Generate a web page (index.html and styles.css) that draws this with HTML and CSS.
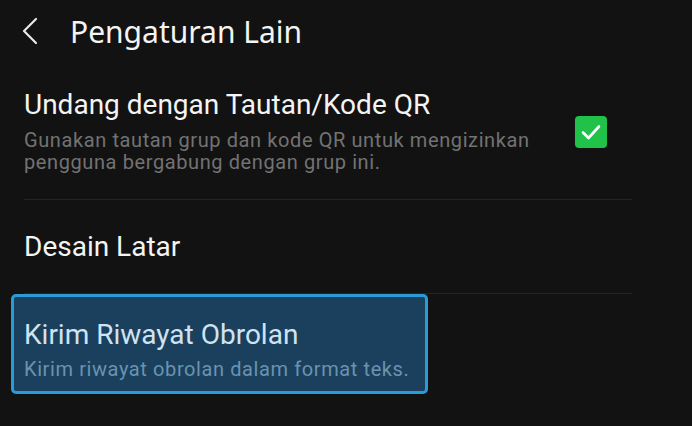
FILE: index.html
```html
<!DOCTYPE html>
<html lang="id">
	<head>
		<meta charset="UTF-8" />
		<meta name="viewport" content="width=device-width, initial-scale=1.0" />
		<title>Pengaturan Lain</title>
		<link rel="stylesheet" href="styles.css">
	</head>
	<body>
		<header class="topbar">
			<span class="back">
				<svg width="18" height="28" viewBox="0 0 18 28">
					<path d="M15 2 L3 14 L15 26" fill="none" stroke="#e8e8e8" stroke-width="2.2" stroke-linecap="round" stroke-linejoin="round" />
				</svg>
			</span>
			<h1>Pengaturan Lain</h1>
		</header>

		<div class="list">
			<div class="item item-check">
				<div class="text">
					<div class="title">Undang dengan Tautan/Kode QR</div>
					<div class="desc">Gunakan tautan grup dan kode QR untuk mengizinkan pengguna bergabung dengan grup ini.</div>
				</div>
				<span class="checkbox">
					<svg width="32" height="32" viewBox="0 0 32 32">
						<rect x="0" y="0" width="32" height="32" rx="4" fill="#20c24a" />
						<path d="M8 16.5 L13.5 22 L24 10.5" fill="none" stroke="#fff" stroke-width="2.6" stroke-linecap="round" stroke-linejoin="round" />
					</svg>
				</span>
			</div>

			<div class="item item-plain">
				<div class="title">Desain Latar</div>
			</div>

			<div class="item item-selected">
				<div class="title">Kirim Riwayat Obrolan</div>
				<div class="desc">Kirim riwayat obrolan dalam format teks.</div>
			</div>
		</div>
	</body>
</html>
```

FILE: styles.css
```css
body {
	margin: 0;
	background-color: #121212;
	font-family: Roboto, "Noto Sans", sans-serif;
	color: #f2f2f2;
	width: 692px;
	height: 426px;
	overflow: hidden;
}
.topbar {
	display: flex;
	align-items: center;
	height: 62px;
	padding-left: 21px;
}
.back {
	display: flex;
	width: 18px;
	margin-right: 31px;
}
h1 {
	margin: 0;
	font-family: "Noto Sans", Roboto, sans-serif;
	font-weight: 400;
	font-size: 30px;
	color: #f4f4f4;
}
.list {
	padding: 0 60px 0 24px;
}
.item {
	border-bottom: 1px solid #242424;
}
.item-check {
	display: flex;
	align-items: center;
	padding: 27px 0 26px;
}
.item-check .text {
	flex: 1;
	padding-right: 30px;
}
.title {
	font-size: 28px;
	line-height: 32px;
	color: #f4f4f4;
}
.desc {
	font-size: 20px;
	line-height: 22px;
	letter-spacing: 0.6px;
	color: #727272;
	margin-top: 8px;
}
.checkbox {
	display: flex;
	margin-right: 25px;
	margin-top: 2px;
}
.item-plain {
	height: 93px;
	display: flex;
	align-items: center;
}
.item-selected {
	box-sizing: border-box;
	border: 3px solid #2b9ad9;
	border-radius: 5px;
	background-color: #1a405d;
	margin-left: -13px;
	width: 417px;
	padding: 22px 0 11px 10px;
}
.item-selected .title {
	color: #cfe3f1;
}
.item-selected .desc {
	color: #6a93ae;
	margin-top: 7px;
}
```
